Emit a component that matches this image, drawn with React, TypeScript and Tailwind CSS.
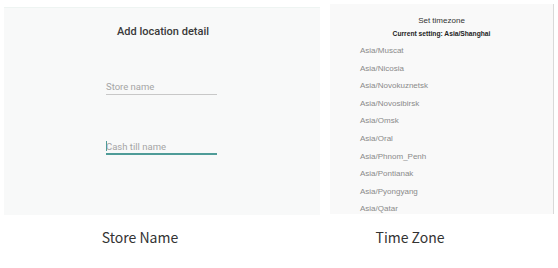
const zones = [
  'Asia/Muscat',
  'Asia/Nicosia',
  'Asia/Novokuznetsk',
  'Asia/Novosibirsk',
  'Asia/Omsk',
  'Asia/Oral',
  'Asia/Phnom_Penh',
  'Asia/Pontianak',
  'Asia/Pyongyang',
  'Asia/Qatar',
];

function StoreNameScreen() {
  return (
    <div className="ml-[4px] mt-[7px] h-[208px] w-[316px] border-t border-[#eef4f2] bg-[#f8f9f9] font-['Roboto',sans-serif]">
      <div className="pl-[113px] pt-[17px] text-[11px] font-medium leading-[14px] text-[#3a3a3a]">
        Add location detail
      </div>
      <div className="ml-[102px] mt-[42px] w-[111px] border-b border-[#c8c8c8] pb-[1px] text-[9.5px] leading-[12px] text-[#a5a5a5]">
        Store name
      </div>
      <div className="ml-[102px] mt-[45px] w-[111px] border-b-2 border-[#4f9c98] text-[9.5px] leading-[12px] text-[#a5a5a5]">
        <span className="mr-[-1px] inline-block h-[10px] w-[1px] translate-y-[1px] bg-[#4f9c98] align-baseline" />
        Cash till name
      </div>
    </div>
  );
}

function TimeZoneScreen() {
  return (
    <div className="ml-[10px] mt-[4px] h-[210px] w-[224px] border-r border-[#d9d9d9] bg-[#f9f9f9] font-['Liberation_Sans',sans-serif]">
      <div className="pt-[11px] text-center text-[8px] leading-[12px] text-[#333]">Set timezone</div>
      <div className="mt-[1px] text-center text-[6.7px] font-bold leading-[11px] text-[#222]">
        Current setting: Asia/Shanghai
      </div>
      <ul className="mt-[3px] pl-[30px]">
        {zones.map((z) => (
          <li key={z} className="h-[17.6px] text-[8px] leading-[17.6px] text-[#8a8a8a]">
            {z}
          </li>
        ))}
      </ul>
    </div>
  );
}

export default function App() {
  return (
    <div className="h-[268px] w-[558px] overflow-hidden bg-white">
      <div className="flex">
        <StoreNameScreen />
        <TimeZoneScreen />
      </div>
      <div className="mt-[12px] flex font-['Noto_Sans_CJK_SC',sans-serif] text-[14px] leading-[20px] text-[#333]">
        <div className="w-[280px] text-center">Store Name</div>
        <div className="w-[260px] text-center">Time Zone</div>
      </div>
    </div>
  );
}
